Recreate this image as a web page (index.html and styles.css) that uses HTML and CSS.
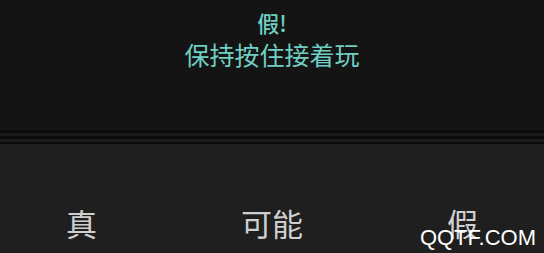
FILE: index.html
```html
<!DOCTYPE html>
<html lang="zh">
<head>
    <meta charset="UTF-8">
    <meta name="viewport" content="width=device-width, initial-scale=1.0">
    <title>真假</title>
    <link rel="stylesheet" href="styles.css">
</head>
<body>
    <section class="screen">
        <div class="message">
            <div class="result">假!</div>
            <div class="hint">保持按住接着玩</div>
        </div>
        <div class="divider">
            <div class="line"></div>
            <div class="band"></div>
            <div class="line"></div>
            <div class="band"></div>
            <div class="line thin"></div>
        </div>
        <div class="answers">
            <span class="answer">真</span>
            <span class="answer">可能</span>
            <span class="answer">假</span>
        </div>
        <span class="watermark">QQTF.COM</span>
    </section>
</body>
</html>
```

FILE: styles.css
```css
body {
    margin: 0;
    background-color: #1f1f1f;
    font-family: "Noto Sans CJK SC", "Noto Sans", sans-serif;
}

.screen {
    position: relative;
    width: 544px;
    height: 253px;
    overflow: hidden;
}

.message {
    height: 130px;
    background-color: #141414;
    color: #70cfc2;
    text-align: center;
    box-sizing: border-box;
    padding-top: 7px;
}

.result {
    font-size: 22px;
    line-height: 30px;
    font-weight: 500;
}

.hint {
    font-size: 25px;
    line-height: 34px;
}

.divider .line {
    height: 3px;
    background-color: #0b0b0b;
}

.divider .line.thin {
    height: 2px;
}

.divider .band {
    height: 3px;
    background-color: #1a1a1a;
}

.answers {
    display: flex;
    justify-content: space-between;
    padding: 58px 66px 0;
    color: #cfcfcf;
    font-size: 31px;
    line-height: 42px;
}

.watermark {
    position: absolute;
    right: 8px;
    bottom: 2px;
    font-family: "Liberation Sans", Arial, sans-serif;
    font-size: 22px;
    color: #ffffff;
}
```
